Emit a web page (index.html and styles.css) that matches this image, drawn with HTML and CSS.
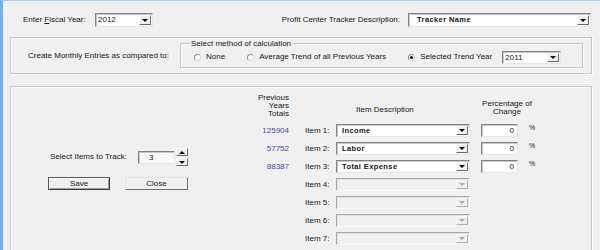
FILE: index.html
```html
<!DOCTYPE html>
<html>
<head>
<meta charset="utf-8">
<link rel="stylesheet" href="styles.css">
</head>
<body>
<div class="window">
  <div class="toprow">
    <span class="lbl">Enter <u>F</u>iscal Year:</span>
    <div class="combo"><span class="val">2012</span><span class="drop"><i class="tri"></i></span></div>
    <span class="lbl right">Profit Center Tracker Description:</span>
    <div class="combo"><span class="val bold wide">Tracker Name</span><span class="drop"><i class="tri"></i></span></div>
  </div>

  <div class="group g1">
    <span class="lbl g1lbl">Create Monthly Entries as compared to:</span>
    <div class="method">
      <span class="legend">Select method of calculation</span>
      <span class="radio"><span class="dot"></span>None</span>
      <span class="radio"><span class="dot"></span>Average Trend of all Previous Years</span>
      <span class="radio last"><span class="dot on"></span>Selected Trend Year</span>
      <div class="combo year"><span class="val">2011</span><span class="drop"><i class="tri"></i></span></div>
    </div>
  </div>

  <div class="group g2">
    <div class="leftpanel">
      <div class="spinrow">
        <span class="lbl spinlbl">Select Items to Track:</span>
        <div class="spinbox">3</div>
        <div class="spinbtns">
          <span class="sb"><i class="tri up"></i></span>
          <span class="sb"><i class="tri"></i></span>
        </div>
      </div>
      <div class="btnrow">
        <button class="btn default">Save</button>
        <button class="btn close">Close</button>
      </div>
    </div>

    <div class="table">
      <div class="hd totals">Previous<br>Years<br>Totals</div>
      <div class="hd desc">Item Description</div>
      <div class="hd pct">Percentage of<br>Change</div>

      <div class="num">125904</div>
      <div class="ilabel">Item 1:</div>
      <div class="combo cell"><span class="val bold">Income</span><span class="drop"><i class="tri"></i></span></div>
      <div class="pctbox">0</div>
      <div class="pcts">%</div>

      <div class="num">57752</div>
      <div class="ilabel">Item 2:</div>
      <div class="combo cell"><span class="val bold">Labor</span><span class="drop"><i class="tri"></i></span></div>
      <div class="pctbox">0</div>
      <div class="pcts">%</div>

      <div class="num">88387</div>
      <div class="ilabel">Item 3:</div>
      <div class="combo cell"><span class="val bold">Total Expense</span><span class="drop"><i class="tri"></i></span></div>
      <div class="pctbox">0</div>
      <div class="pcts">%</div>

      <div class="ilabel">Item 4:</div>
      <div class="combo cell dis"><span class="val"></span><span class="drop"><i class="tri"></i></span></div>

      <div class="ilabel">Item 5:</div>
      <div class="combo cell dis"><span class="val"></span><span class="drop"><i class="tri"></i></span></div>

      <div class="ilabel">Item 6:</div>
      <div class="combo cell dis"><span class="val"></span><span class="drop"><i class="tri"></i></span></div>

      <div class="ilabel">Item 7:</div>
      <div class="combo cell dis"><span class="val"></span><span class="drop"><i class="tri"></i></span></div>
    </div>
  </div>
</div>
</body>
</html>
```

FILE: styles.css
```css
* { box-sizing: border-box; }
html, body { margin: 0; padding: 0; }
body {
  background: #f0f0f0;
  font-family: "Liberation Sans", Arial, sans-serif;
  font-size: 8px;
  color: #151515;
}
.window {
  width: 600px;
  height: 250px;
  overflow: hidden;
  background: #f0f0f0;
  border-left: 3px solid #7aaee2;
  border-top: 1px solid #a9ccee;
}
.lbl { white-space: nowrap; line-height: 10px; }

/* top row */
.toprow {
  display: grid;
  grid-template-columns: 72px 58px 1fr 183px;
  align-items: center;
  height: 14px;
  margin: 12px 9px 0 20px;
}
.lbl.right { text-align: right; padding-right: 8px; }

/* combo box */
.combo {
  display: flex;
  height: 14px;
  background: #fff;
  border: 1px solid;
  border-color: #828282 #e6e6e6 #e6e6e6 #828282;
  box-shadow: inset 1px 1px 0 #c8c8c8;
}
.combo .val {
  flex: 1;
  padding-left: 2px;
  line-height: 12px;
  white-space: nowrap;
  overflow: hidden;
}
.val.bold {
  font-weight: bold;
  font-size: 7.5px;
  letter-spacing: 0.4px;
  padding-left: 5px;
}
.val.bold.wide { padding-left: 8px; }
.drop {
  width: 12px;
  margin: 1px;
  background: #f0f0f0;
  border: 1px solid;
  border-color: #fdfdfd #6a6a6a #6a6a6a #fdfdfd;
  display: flex;
  align-items: center;
  justify-content: center;
}
.tri {
  display: block;
  width: 0;
  height: 0;
  border-left: 3px solid transparent;
  border-right: 3px solid transparent;
  border-top: 3px solid #000;
}
.tri.up { border-top: 0; border-bottom: 3px solid #000; }

.combo.dis {
  background: #f0f0f0;
  border-color: #a8a8a8 #f8f8f8 #f8f8f8 #a8a8a8;
  box-shadow: inset 1px 1px 0 #e0e0e0;
}
.combo.dis .drop { border-color: #fafafa #b0b0b0 #b0b0b0 #fafafa; }
.combo.dis .tri { border-top-color: #a8a8a8; }

/* group boxes */
.group {
  border: 1px solid #c6c6c6;
  box-shadow: inset 1px 1px 0 #fff, 1px 1px 0 #fff;
}
.g1 {
  margin: 10px 8px 0 7px;
  height: 37px;
  display: flex;
  align-items: flex-start;
  padding: 5px 0 0 17px;
}
.g1lbl { width: 152px; margin-top: 8px; }

.method {
  position: relative;
  width: 403px;
  height: 25px;
  border: 1px solid #c6c6c6;
  box-shadow: inset 1px 1px 0 #fff, 1px 1px 0 #fff;
  display: flex;
  align-items: center;
  padding: 3px 0 0 13px;
}
.legend {
  position: absolute;
  top: -5px;
  left: 9px;
  padding: 0 1px;
  background: #f0f0f0;
  line-height: 9px;
  white-space: nowrap;
}
.radio {
  display: flex;
  align-items: center;
  line-height: 10px;
  white-space: nowrap;
  margin-right: 22px;
}
.radio.last { margin-right: 10px; }
.dot {
  position: relative;
  width: 7px;
  height: 7px;
  border-radius: 50%;
  border: 1px solid;
  border-color: #8a8a8a #d8d8d8 #d8d8d8 #8a8a8a;
  background: #fff;
  margin-right: 5px;
}
.dot.on::after {
  content: "";
  position: absolute;
  left: 1px;
  top: 1px;
  width: 3px;
  height: 3px;
  border-radius: 50%;
  background: #111;
}
.combo.year { width: 59px; height: 13px; }
.combo.year .val { line-height: 11px; }

/* bottom group */
.g2 {
  margin: 12px 8px 0 7px;
  height: 200px;
  display: flex;
}
.leftpanel {
  width: 228px;
  flex: none;
  padding: 61px 0 0 37px;
}
.spinrow {
  display: flex;
  align-items: center;
  height: 18px;
  padding-left: 2px;
}
.spinlbl { width: 88px; }
.spinbox {
  width: 37px;
  height: 13px;
  background: #fafafa;
  border: 1px solid;
  border-color: #828282 #e6e6e6 #e6e6e6 #828282;
  box-shadow: inset 1px 1px 0 #c8c8c8;
  padding-left: 10px;
  line-height: 11px;
}
.spinbtns {
  width: 12px;
  height: 18px;
  margin-left: 1px;
  display: flex;
  flex-direction: column;
  justify-content: space-between;
}
.sb {
  height: 8px;
  background: #f0f0f0;
  border: 1px solid;
  border-color: #fdfdfd #6a6a6a #6a6a6a #fdfdfd;
  display: flex;
  align-items: center;
  justify-content: center;
}
.btnrow { display: flex; margin-top: 11px; }
.btn {
  font-family: inherit;
  font-size: 8px;
  color: #151515;
  width: 62px;
  height: 13px;
  padding: 0;
  line-height: 11px;
  background: #f0f0f0;
  border: 1px solid;
  border-color: #e2e2e2 #707070 #707070 #e2e2e2;
}
.btn.default {
  border-color: #5a5a5a #3c3c3c #3c3c3c #5a5a5a;
  box-shadow: inset 1px 1px 0 #fff, inset -1px -1px 0 #a0a0a0;
}
.btn.close { width: 63px; margin-left: 15px; }

.table {
  display: grid;
  grid-template-columns: 50px 47px 134px 48px 30px;
  grid-template-rows: auto;
  grid-auto-rows: 18px;
  align-content: start;
  padding-top: 7px;
}
.hd { line-height: 8px; white-space: nowrap; }
.hd.totals { grid-column: 1; text-align: right; margin-bottom: 5px; }
.hd.desc { grid-column: 3; align-self: end; padding-left: 20px; margin-bottom: 9px; }
.hd.pct { grid-column: 4 / 6; align-self: end; text-align: center; padding-right: 4px; margin-bottom: 7px; }

.num {
  grid-column: 1;
  text-align: right;
  color: #4448ad;
  line-height: 13px;
  margin-top: 1px;
  align-self: start;
}
.ilabel {
  grid-column: 2;
  padding-left: 16px;
  line-height: 13px;
  margin-top: 1px;
  align-self: start;
  white-space: nowrap;
}
.combo.cell {
  grid-column: 3;
  height: 13px;
  margin-top: 1px;
  align-self: start;
}
.combo.cell .val { line-height: 11px; }
.pctbox {
  grid-column: 4;
  width: 37px;
  height: 13px;
  margin: 1px 0 0 11px;
  align-self: start;
  background: #fff;
  border: 1px solid;
  border-color: #828282 #e6e6e6 #e6e6e6 #828282;
  box-shadow: inset 1px 1px 0 #c8c8c8;
  text-align: right;
  padding-right: 3px;
  line-height: 11px;
}
.pcts {
  grid-column: 5;
  padding-left: 11px;
  line-height: 9px;
  align-self: start;
  font-size: 7px;
}
```
